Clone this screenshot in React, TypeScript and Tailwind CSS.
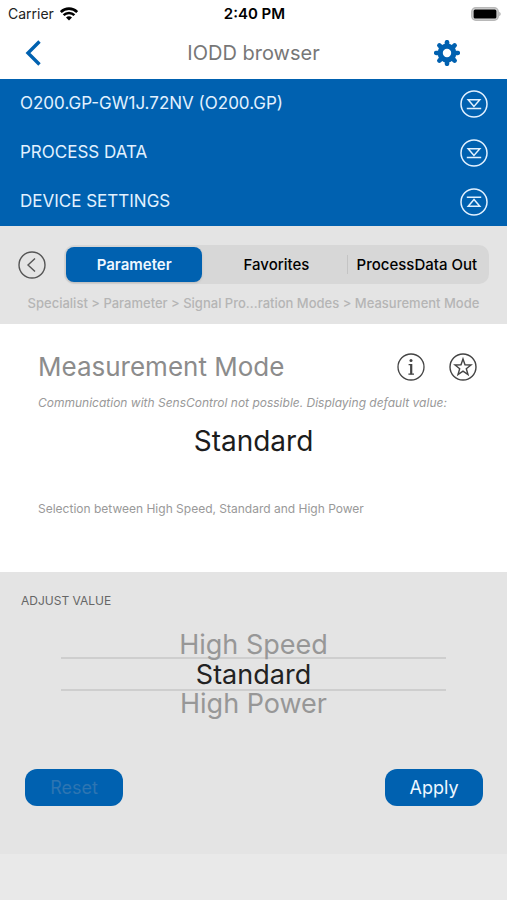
import { useState } from "react";

const SECTIONS = [
  { title: "O200.GP-GW1J.72NV (O200.GP)", open: false },
  { title: "PROCESS DATA", open: false },
  { title: "DEVICE SETTINGS", open: true },
];

const TABS = ["Parameter", "Favorites", "ProcessData Out"];
const MODES = ["High Speed", "Standard", "High Power"];

const TEETH = [0, 45, 90, 135, 180, 225, 270, 315];

function WifiIcon() {
  return (
    <svg viewBox="0 0 18 14" className="h-3.5 w-[18px]" fill="none" stroke="currentColor" aria-hidden="true">
      <path d="M0.8 5a11.6 11.6 0 0 1 16.400 0" strokeWidth="2.7" />
      <path d="M3.6 8.2a7.600 7.600 0 0 1 10.800 0" strokeWidth="2.5" />
      <path d="M9 13.6 6 10.600a4.200 4.200 0 0 1 6 0z" fill="currentColor" stroke="none" />
    </svg>
  );
}

function BatteryIcon() {
  return (
    <svg viewBox="0 0 30 14" className="h-3.5 w-[30px]" aria-hidden="true">
      <rect x="0.8" y="0.8" width="26.400" height="12.400" rx="4" fill="#d8d8d8" stroke="#b8b8b8" strokeWidth="1.5" />
      <rect x="2.600" y="2.600" width="22.800" height="8.800" rx="1.500" fill="#000" />
      <path d="M28.200 4.800c2 .8 2 3.600 0 4.400z" fill="#b5b5b5" />
    </svg>
  );
}

function GearIcon() {
  return (
    <svg viewBox="0 0 26 26" className="size-[26px]" fill="none" stroke="currentColor" aria-hidden="true">
      <circle cx="13" cy="13" r="6.8" strokeWidth="5.2" />
      {TEETH.map((angle) => (
        <path key={angle} d="M13 5V2.2" strokeWidth="4.6" strokeLinecap="round" transform={`rotate(${angle} 13 13)`} />
      ))}
    </svg>
  );
}

function SectionIcon({ open }: { open: boolean }) {
  return (
    <svg viewBox="0 0 28 28" className="size-7" fill="none" stroke="currentColor" strokeWidth="1.5" aria-hidden="true">
      <circle cx="14" cy="14" r="13" />
      {open ? (
        <path d="M6.800 9.200h14.400M14 11.400l-5.800 6.800h11.600z" />
      ) : (
        <path d="M6.800 18.400h14.400M14 16.400 8.200 9.800h11.600z" />
      )}
    </svg>
  );
}

export default function App() {
  const [tab, setTab] = useState("Parameter");
  const [mode, setMode] = useState("Standard");

  return (
    <div className="flex min-h-screen flex-col bg-[#e9e9e9] font-['Inter','Liberation_Sans',sans-serif]">
      <div className="grid h-7 grid-cols-3 items-center bg-white pr-1.5 pl-2 text-sm text-black">
        <div className="flex items-center gap-1.5">
          <span className="text-[#222]">Carrier</span>
          <WifiIcon />
        </div>
        <span className="text-center text-[15px] font-semibold">2:40 PM</span>
        <div className="flex justify-end">
          <BatteryIcon />
        </div>
      </div>

      <header className="grid h-[51px] grid-cols-[61px_1fr_61px] items-center bg-white pb-0.5 text-[#0061b0]">
        <button type="button" aria-label="Back" className="flex justify-start pl-6">
          <svg viewBox="0 0 18 26" className="h-[26px] w-[18px]" fill="none" stroke="currentColor" strokeWidth="3.4" aria-hidden="true">
            <path d="M15.500 1.500 4 13l11.500 11.500" />
          </svg>
        </button>
        <h1 className="text-center text-xl text-[#777]">IODD browser</h1>
        <button type="button" aria-label="Settings" className="flex justify-start">
          <span className="-ml-3">
            <GearIcon />
          </span>
        </button>
      </header>

      <nav className="flex flex-col bg-[#0061b0] text-[#e2f1ff]">
        {SECTIONS.map(({ title, open }) => (
          <button
            key={title}
            type="button"
            aria-expanded={open}
            className="flex h-[49px] items-center justify-between pr-[19px] pl-5 text-[17px]"
          >
            <span>{title}</span>
            <SectionIcon open={open} />
          </button>
        ))}
      </nav>

      <section className="bg-[#e4e4e4] px-[18px] pt-[19px] pb-3">
        <div className="flex items-center gap-[18px]">
          <button type="button" aria-label="Previous level" className="text-[#555]">
            <svg viewBox="0 0 28 28" className="size-7" fill="none" stroke="currentColor" strokeWidth="1.4" aria-hidden="true">
              <circle cx="14" cy="14" r="13" />
              <path d="M17 7.500 10 14l7 6.500" />
            </svg>
          </button>
          <div role="tablist" className="grid h-[39px] flex-1 grid-cols-3 rounded-[10px] bg-[#d7d7d7] p-0.5 text-[15px] font-medium">
            {TABS.map((name, index) => (
              <button
                key={name}
                type="button"
                role="tab"
                aria-selected={name === tab}
                onClick={() => setTab(name)}
                className="relative flex items-center justify-center rounded-lg pt-0.5 whitespace-nowrap text-black aria-selected:mr-1 aria-selected:bg-[#0061b0] aria-selected:font-semibold aria-selected:text-[#eef7ff] aria-selected:shadow-sm"
              >
                {index === 2 && <span className="absolute inset-y-2 left-0 w-px bg-[#c4c4c4]" />}
                {name}
              </button>
            ))}
          </div>
        </div>
        <p className="mt-2.5 text-center text-[13px] leading-[18px] font-medium whitespace-nowrap text-[#b5b5b5]">
          Specialist &gt; Parameter &gt; Signal Pro...ration Modes &gt; Measurement Mode
        </p>
      </section>

      <main className="bg-white px-[30px] pt-[27px] pb-[55px]">
        <div className="flex items-center justify-between pl-2">
          <h2 className="text-[26px] leading-8 text-[#8c8c8c]">Measurement Mode</h2>
          <div className="flex gap-6 text-[#444]">
            <button type="button" aria-label="Information">
              <svg viewBox="0 0 28 28" className="size-7" fill="none" stroke="currentColor" strokeWidth="1.3" aria-hidden="true">
                <circle cx="14" cy="14" r="13" />
                <circle cx="14" cy="7.600" r="1.500" fill="currentColor" stroke="none" />
                <path d="M11.600 11.600h2.400M11.400 21.200h5.600" strokeWidth="1.300" />
                <path d="M14.200 11v10.200" strokeWidth="2.200" />
              </svg>
            </button>
            <button type="button" aria-label="Add to favorites">
              <svg viewBox="0 0 28 28" className="size-7" fill="none" stroke="currentColor" strokeWidth="1.4" aria-hidden="true">
                <circle cx="14" cy="14" r="13" />
                <path d="m14 6 2 5.800 6 .2-4.700 3.700 1.700 5.800-5-3.400-5 3.400 1.700-5.800L6 12l6-.2z" />
              </svg>
            </button>
          </div>
        </div>
        <p className="mt-3 pl-2 text-xs whitespace-nowrap text-[#999] italic">
          Communication with SensControl not possible. Displaying default value:
        </p>
        <p className="mt-3 text-center text-[28px] leading-9 text-[#1c1c1c]">Standard</p>
        <p className="mt-[42px] pl-2 text-xs text-[#999]">Selection between High Speed, Standard and High Power</p>
      </main>

      <section className="bg-[#e4e4e4] pt-[21px] pb-12">
        <h3 className="px-[21px] text-xs text-[#666]">ADJUST VALUE</h3>
        <fieldset className="mx-[61px] mt-[23px] text-center text-[27px] leading-[25px]">
          <legend className="sr-only">Measurement mode</legend>
          {MODES.map((name) => (
            <label
              key={name}
              className="flex h-[25px] items-center justify-center text-[#979797] has-checked:h-[34px] has-checked:border-y-2 has-checked:border-[#cecece] has-checked:text-[#222]"
            >
              <input
                type="radio"
                name="mode"
                className="sr-only"
                checked={name === mode}
                onChange={() => setMode(name)}
              />
              {name}
            </label>
          ))}
        </fieldset>
        <div className="mt-[53px] flex justify-between pr-6 pl-[25px] text-lg">
          <button type="button" disabled className="h-[37px] w-[98px] rounded-xl bg-[#0061b0] text-[#2d75b2]">
            Reset
          </button>
          <button type="button" className="h-[37px] w-[98px] rounded-xl bg-[#0061b0] text-[#eef7ff]">
            Apply
          </button>
        </div>
      </section>
    </div>
  );
}
